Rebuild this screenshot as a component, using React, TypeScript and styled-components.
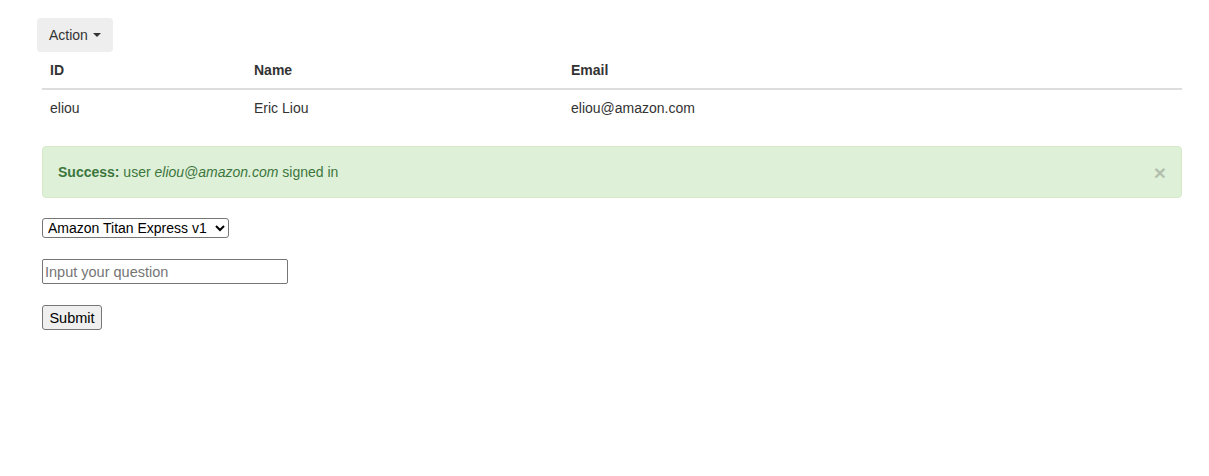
import React from "react";
import styled, { createGlobalStyle } from "styled-components";

const Global = createGlobalStyle`
  html, body { margin: 0; padding: 0; background: #fff; }
  body {
    font-family: "Liberation Sans", Arial, sans-serif;
    font-size: 14px;
    line-height: 20px;
    color: #333;
  }
  * { box-sizing: border-box; }
`;

const Page = styled.div`
  padding: 18px 27px 0 42px;
  width: 1209px;
`;

const Dropdown = styled.div`
  margin-left: -5px;
`;

const ActionButton = styled.button`
  display: inline-flex;
  align-items: center;
  height: 34px;
  padding: 6px 12px;
  border: 0;
  border-radius: 4px;
  background: #eeeeee;
  color: #333;
  font-family: "Liberation Sans", Arial, sans-serif;
  font-size: 14px;
  line-height: 20px;
  cursor: pointer;
`;

const Caret = styled.span`
  display: inline-block;
  width: 0;
  height: 0;
  margin-left: 5px;
  border-top: 4px solid #333;
  border-left: 4px solid transparent;
  border-right: 4px solid transparent;
`;

const Table = styled.table`
  width: 1140px;
  border-collapse: collapse;
  margin-bottom: 20px;
`;

const Th = styled.th<{ $w: number }>`
  width: ${(p) => p.$w}px;
  text-align: left;
  font-weight: bold;
  padding: 8px;
  line-height: 20px;
  border-bottom: 2px solid #dddddd;
  vertical-align: bottom;
`;

const Td = styled.td`
  padding: 8px;
  line-height: 20px;
  border-top: 1px solid #dddddd;
`;

const Alert = styled.div`
  position: relative;
  width: 1140px;
  padding: 15px 35px 15px 15px;
  margin-bottom: 20px;
  border: 1px solid #d6e9c6;
  border-radius: 4px;
  background: #dff0d8;
  color: #3c763d;
`;

const Close = styled.button`
  position: absolute;
  right: 15px;
  top: 16px;
  padding: 0;
  border: 0;
  background: transparent;
  font-family: "Liberation Sans", Arial, sans-serif;
  font-size: 21px;
  font-weight: bold;
  line-height: 20px;
  color: #000;
  opacity: 0.2;
  cursor: pointer;
`;

const Form = styled.div`
  display: flex;
  flex-direction: column;
  align-items: flex-start;
  gap: 21px;
`;

const Select = styled.select`
  width: 187px;
  height: 20px;
  padding: 0 1px;
  border: 1px solid #767676;
  border-radius: 3px;
  background: #fff;
  color: #000;
  font-family: "Liberation Sans", Arial, sans-serif;
  font-size: 14px;
`;

const Input = styled.input`
  width: 246px;
  height: 25px;
  padding: 1px 2px;
  border: 1px solid #767676;
  border-radius: 2px;
  font-family: "Liberation Sans", Arial, sans-serif;
  font-size: 14.5px;
  color: #000;
  &::placeholder { color: #757575; }
`;

const Submit = styled.button`
  width: 60px;
  height: 25px;
  padding: 1px 6px;
  border: 1px solid #767676;
  border-radius: 3px;
  background: #efefef;
  color: #000;
  font-family: "Liberation Sans", Arial, sans-serif;
  font-size: 14.5px;
`;

export default function App() {
  return (
    <>
      <Global />
      <Page>
        <Dropdown>
          <ActionButton>
            Action <Caret />
          </ActionButton>
        </Dropdown>
        <Table>
          <thead>
            <tr>
              <Th $w={204}>ID</Th>
              <Th $w={317}>Name</Th>
              <Th $w={619}>Email</Th>
            </tr>
          </thead>
          <tbody>
            <tr>
              <Td>eliou</Td>
              <Td>Eric Liou</Td>
              <Td>eliou@amazon.com</Td>
            </tr>
          </tbody>
        </Table>
        <Alert>
          <Close aria-label="Close">×</Close>
          <strong>Success:</strong> user <em>eliou@amazon.com</em> signed in
        </Alert>
        <Form>
          <Select defaultValue="titan">
            <option value="titan">Amazon Titan Express v1</option>
          </Select>
          <Input placeholder="Input your question" />
          <Submit>Submit</Submit>
        </Form>
      </Page>
    </>
  );
}
